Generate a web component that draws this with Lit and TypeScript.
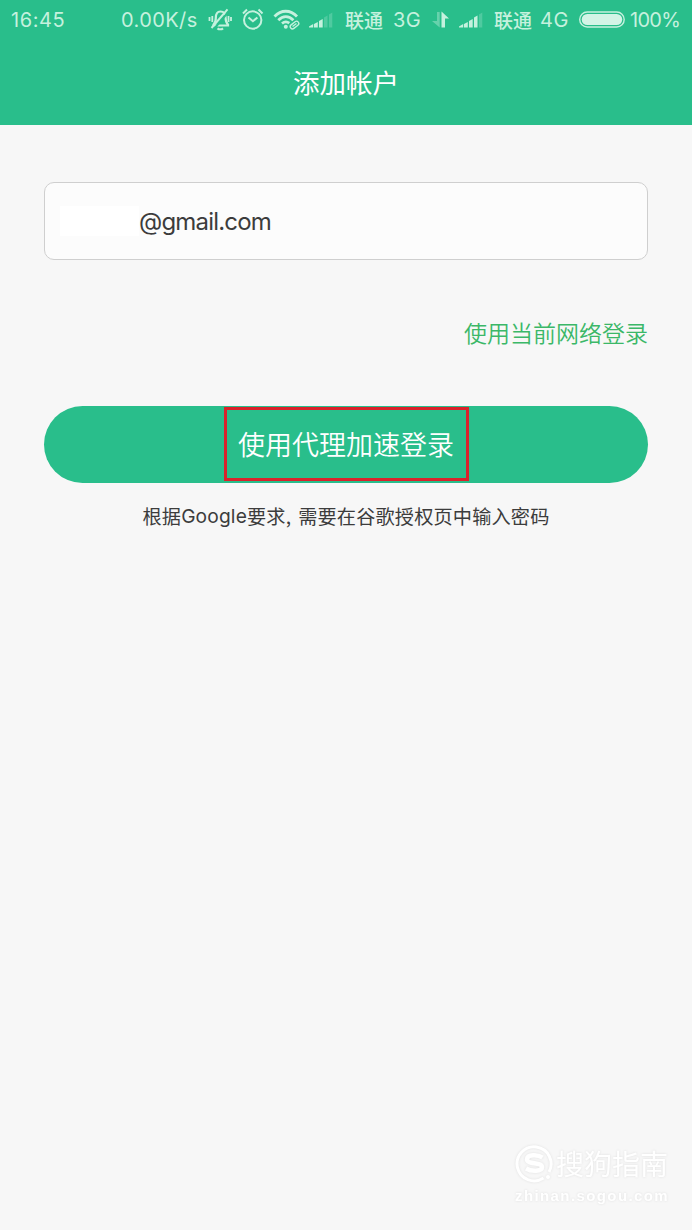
import { LitElement, html, css, svg } from "lit";
import { customElement } from "lit/decorators.js";

@customElement("signal-bars")
class SignalBars extends LitElement {
  static properties = { level: { type: Number } };
  declare level: number;

  static styles = css`
    :host { display: block; width: 24px; height: 18px; }
    svg { display: block; }
  `;

  constructor() {
    super();
    this.level = 3;
  }

  render() {
    const shapes = [
      "M0 16.500v-1L4.200 13v3.500z",
      "M5 16.500V13l3.800-2v5.500z",
      "M10 16.500V10l3.700-2v8.500z",
      "M15 16.500V6.500l3.500-2v12z",
      "M20 16.500V3.500l3.300-2v15z",
    ];
    return html`<svg width="24" height="18" viewBox="0 0 24 18" fill="#c5f1de">
      ${shapes.map((d, i) => svg`<path opacity=${i < this.level ? 1 : 0.25} d=${d} />`)}
    </svg>`;
  }
}

@customElement("status-bar")
class StatusBar extends LitElement {
  static styles = css`
    :host {
      display: flex;
      align-items: center;
      height: 40px;
      padding-left: 11px;
      box-sizing: border-box;
      color: #c5f1de;
      font: 20px/40px Inter, "Noto Sans CJK SC", sans-serif;
      white-space: nowrap;
    }
    svg { display: block; flex: none; }
    span { flex: none; }
    signal-bars { flex: none; }
    .time { width: 110px; letter-spacing: 0.6px; }
    .speed { width: 87px; letter-spacing: 0.4px; }
    .bell { margin-right: 8px; }
    .alarm { margin-right: 8px; }
    .wifi { margin-right: 9px; }
    .carrier { width: 48px; font: 500 19px/38px "Noto Sans CJK SC", sans-serif; }
    .first { margin-left: 12px; }
    .second { margin-left: 11px; width: 46px; }
    .network { width: 38px; letter-spacing: 0.5px; }
    .fourth { width: 39px; }
    .battery { width: 51px; }
    .charge { letter-spacing: -0.7px; }
  `;

  render() {
    return html`
      <span class="time">16:45</span>
      <span class="speed">0.00K/s</span>
      <svg class="bell" width="26" height="24" viewBox="0 0 26 24" fill="none" stroke="#c5f1de" stroke-width="2.200">
        <path d="M5.500 16.500c1.800-1.500 2.300-3 2.300-6.500C7.800 6 9.500 3.500 12.500 3.500c3.500 0 5.100 2.500 5.100 6.500 0 3.500.6 5 2.400 6.500v1H5.500z"/>
        <path d="M9.500 20.300c1.500 1.300 4 1.300 5.500 0"/>
        <path d="M4.300 8v6M1.500 9v4M20.500 8v6M23 9v4" stroke-width="1.800"/>
        <path d="M6 21L21.500 2.500" stroke="#29be8b" stroke-width="2"/>
        <path d="M3.500 20L19.500 1.300" stroke-width="2"/>
      </svg>
      <svg class="alarm" width="23" height="24" viewBox="0 0 23 24" fill="none" stroke="#c5f1de" stroke-width="2">
        <circle cx="10.700" cy="12" r="8.700"/>
        <path d="M6.500 9.500l4.400 3.800 4.500-3.800M1 5.500L5 1.500M20.500 5.500l-4-4"/>
      </svg>
      <svg class="wifi" width="27" height="24" viewBox="0 0 27 24" fill="none" stroke="#c5f1de" stroke-width="2.800">
        <path d="M1.500 8.500C8 1.500 17.500 1.500 24 8.500"/>
        <path d="M5.300 12.200c4.600-4.600 10.500-4.600 15.100 0"/>
        <path d="M9 15.500c2.400-2 5.200-2 7.300-.3"/>
        <circle cx="12.800" cy="18.700" r="2" fill="#c5f1de" stroke="none"/>
        <g stroke-width="1.400" transform="rotate(-38 21.500 17)">
          <rect x="16.700" y="14.800" width="9.500" height="4.500" rx="2.200"/>
          <path d="M19 17h5"/>
        </g>
      </svg>
      <signal-bars level="3"></signal-bars>
      <span class="carrier first">联通</span>
      <span class="network">3G</span>
      <svg width="28" height="20" viewBox="0 0 28 20" fill="#c5f1de">
        <path opacity=".4" d="M6 2h2.700v15.500L1 11h5z"/>
        <path d="M10.500 1.500L18 8.500h-4v9h-3.500z"/>
      </svg>
      <signal-bars level="4"></signal-bars>
      <span class="carrier second">联通</span>
      <span class="network fourth">4G</span>
      <svg class="battery" width="51" height="18" viewBox="0 0 51 18">
        <rect x=".7" y="1" width="44.500" height="15" rx="7.500" fill="none" stroke="#c5f1de" stroke-width="1.400"/>
        <rect x="2.700" y="2.900" width="40.500" height="11.200" rx="5.600" fill="#d3f4e6"/>
      </svg>
      <span class="charge">100%</span>
    `;
  }
}

@customElement("site-mark")
class SiteMark extends LitElement {
  static styles = css`
    :host {
      display: block;
      width: 155px;
      color: #fff;
      filter: drop-shadow(0 0 1px #dfdfdf);
      white-space: nowrap;
    }
    .brand { display: flex; align-items: center; height: 36px; gap: 2px; }
    .name { font: 28px/36px "Noto Sans CJK SC", sans-serif; }
    .site { font: 700 15px/30px "Liberation Sans", sans-serif; letter-spacing: 1.4px; }
  `;

  render() {
    return html`
      <div class="brand">
        <svg width="39" height="39" viewBox="0 0 39 39" fill="none" stroke="#fff">
          <path d="M28.500 34A17 17 0 1 1 34 28" stroke-width="3"/>
          <path d="M27.500 13.500C23 10.500 12 10 12 15.500c0 5 15 2.500 15 7.500 0 5-11 4.500-16 1.500" stroke-width="4.500"/>
          <circle cx="33" cy="33" r="2" fill="#fff" stroke="none"/>
        </svg>
        <span class="name">搜狗指南</span>
      </div>
      <div class="site">zhinan.sogou.com</div>
    `;
  }
}

@customElement("app-root")
class AppRoot extends LitElement {
  static styles = css`
    :host {
      display: flex;
      flex-direction: column;
      box-sizing: border-box;
      width: 692px;
      height: 1230px;
      background: #f7f7f7;
      color: #3c3c3c;
      font-family: "Noto Sans CJK SC", sans-serif;
      overflow: hidden;
      white-space: nowrap;
    }
    header { height: 125px; background: #29be8b; }
    h1 {
      margin: 0;
      text-align: center;
      color: #fff;
      font: 400 26.500px/84px "Noto Sans CJK SC", sans-serif;
    }
    main { display: flex; flex-direction: column; padding: 57px 44px 0; }
    .field {
      display: flex;
      align-items: center;
      box-sizing: border-box;
      height: 78px;
      padding-left: 15px;
      border: 1px solid #cfcfcf;
      border-radius: 10px;
      background: #fcfcfc;
      font: 24px/30px Inter, sans-serif;
    }
    .mask { width: 79px; height: 30px; background: #fff; }
    .email { padding-top: 2px; letter-spacing: -0.8px; }
    .direct {
      align-self: flex-end;
      margin-top: 52px;
      color: #3bb868;
      font-size: 23px;
      font-weight: 350;
      line-height: 40px;
    }
    .proxy {
      display: flex;
      justify-content: center;
      margin-top: 54px;
      height: 77px;
      padding: 1px 0 0;
      border: 0;
      border-radius: 39px;
      background: #29be8b;
      color: #fff;
      font: 350 27px/68px "Noto Sans CJK SC", sans-serif;
    }
    .frame {
      box-sizing: border-box;
      width: 245px;
      height: 74px;
      border: 3px solid #d9232b;
      text-align: center;
    }
    .note {
      display: flex;
      justify-content: center;
      margin-top: 13px;
      font-size: 19.200px;
      letter-spacing: 0.15px;
      line-height: 40px;
    }
    .latin { font-family: Inter, sans-serif; }
    .rest { margin-left: 7px; }
    footer { display: flex; justify-content: flex-end; margin-top: auto; padding: 0 22px 19px 0; }
  `;

  render() {
    return html`
      <header>
        <status-bar></status-bar>
        <h1>添加帐户</h1>
      </header>
      <main>
        <div class="field"><span class="mask"></span><span class="email">@gmail.com</span></div>
        <div class="direct">使用当前网络登录</div>
        <button class="proxy"><span class="frame">使用代理加速登录</span></button>
        <div class="note">根据<span class="latin">Google</span>要求,<span class="rest">需要在谷歌授权页中输入密码</span></div>
      </main>
      <footer><site-mark></site-mark></footer>
    `;
  }
}
